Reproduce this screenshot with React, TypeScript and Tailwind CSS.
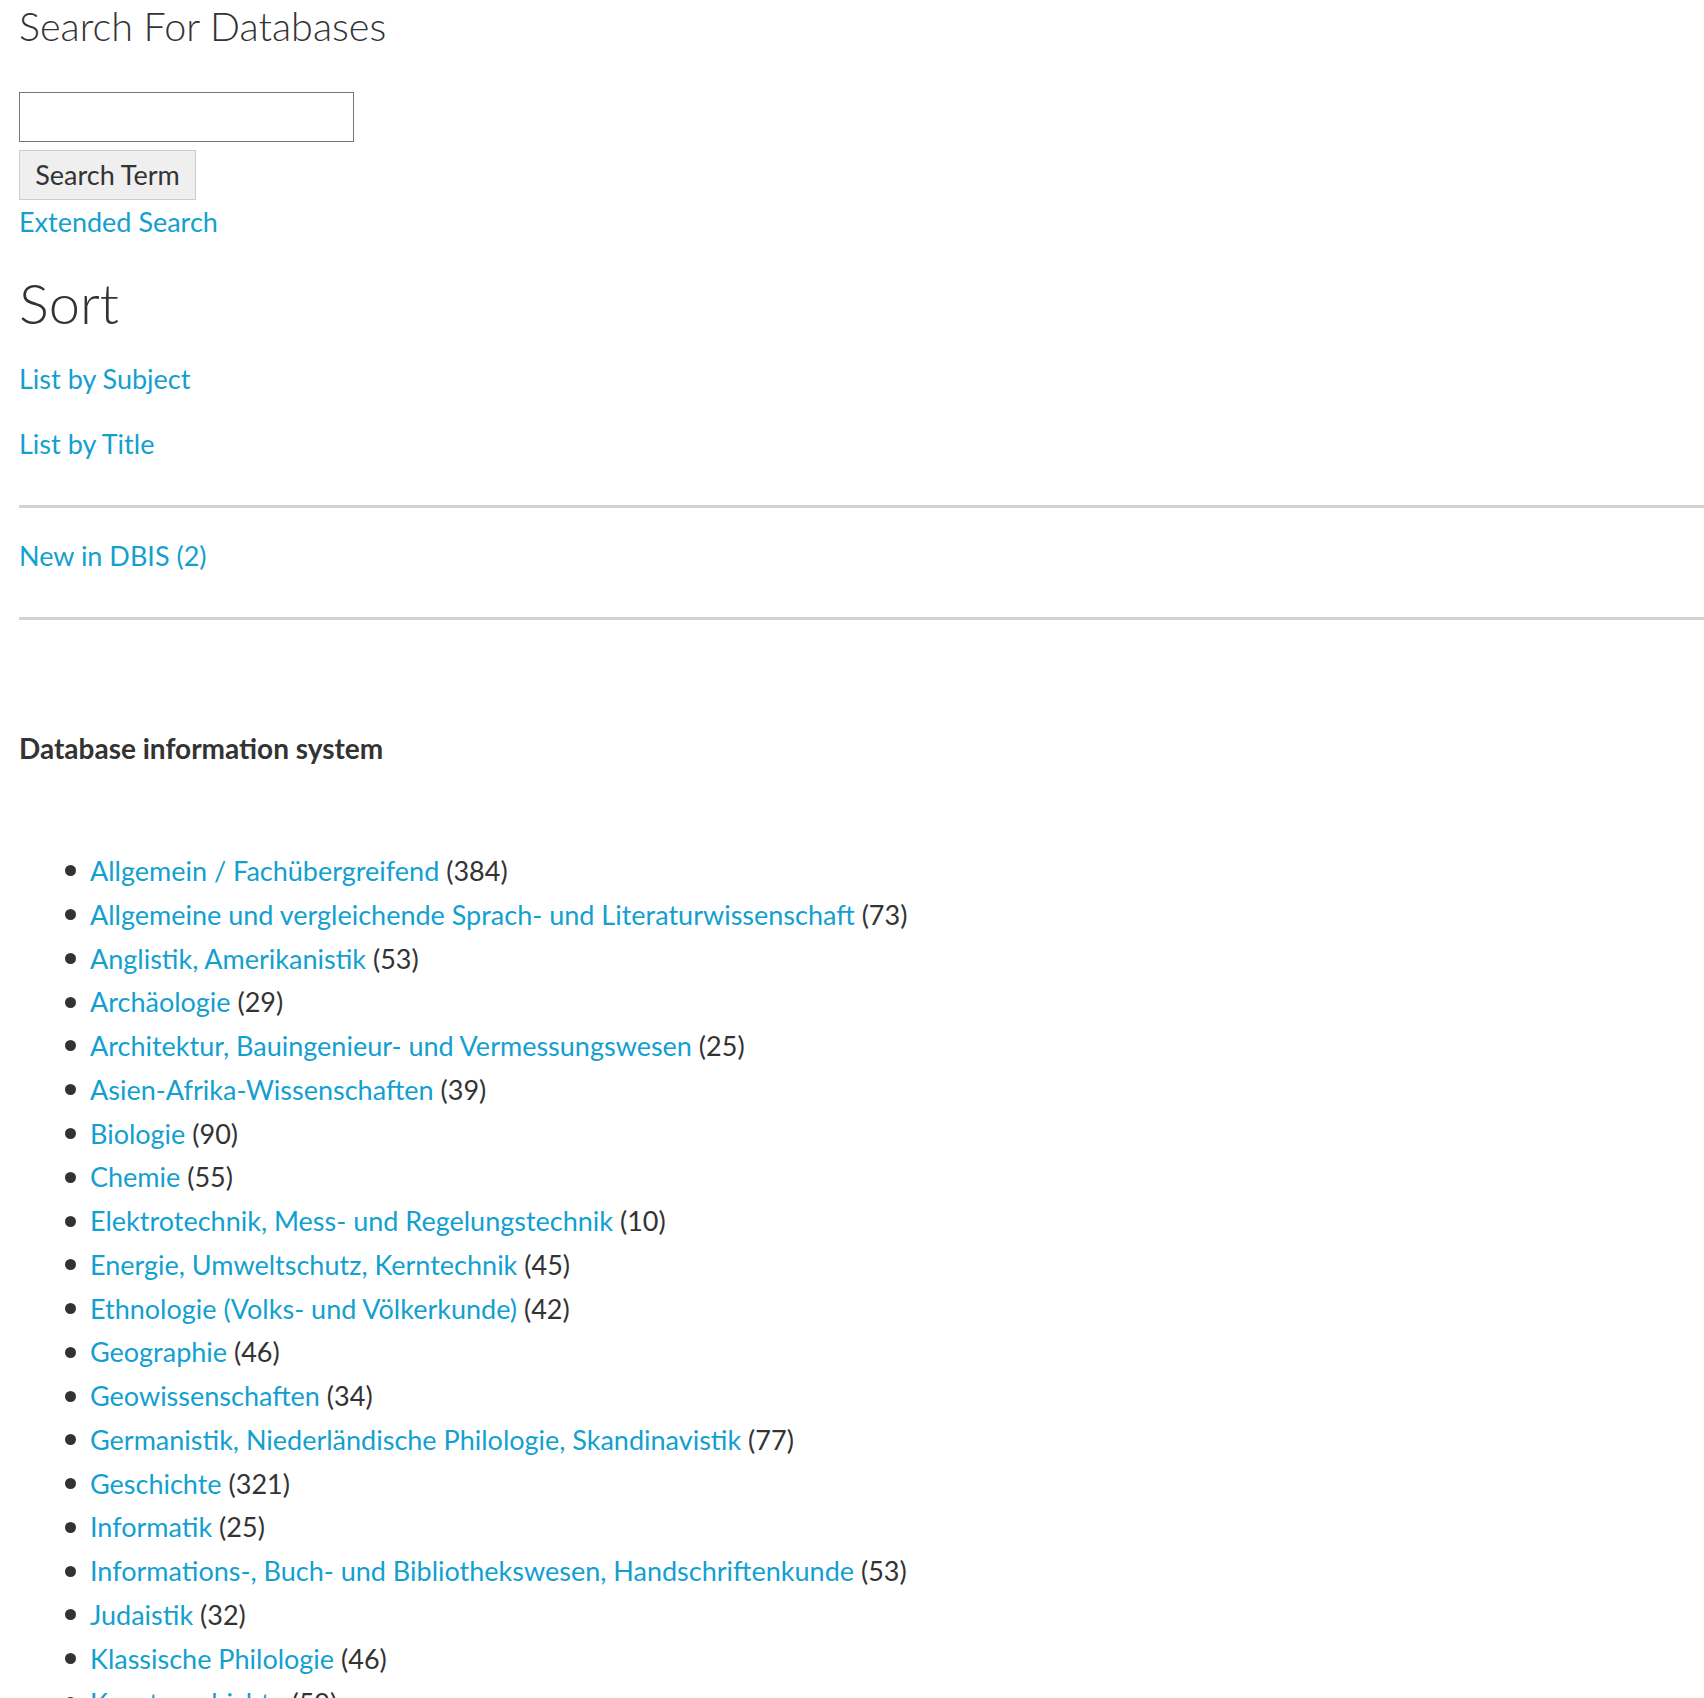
import React from 'react';

const SUBJECTS: { name: string; count: number }[] = [
  { name: 'Allgemein / Fachübergreifend', count: 384 },
  { name: 'Allgemeine und vergleichende Sprach- und Literaturwissenschaft', count: 73 },
  { name: 'Anglistik, Amerikanistik', count: 53 },
  { name: 'Archäologie', count: 29 },
  { name: 'Architektur, Bauingenieur- und Vermessungswesen', count: 25 },
  { name: 'Asien-Afrika-Wissenschaften', count: 39 },
  { name: 'Biologie', count: 90 },
  { name: 'Chemie', count: 55 },
  { name: 'Elektrotechnik, Mess- und Regelungstechnik', count: 10 },
  { name: 'Energie, Umweltschutz, Kerntechnik', count: 45 },
  { name: 'Ethnologie (Volks- und Völkerkunde)', count: 42 },
  { name: 'Geographie', count: 46 },
  { name: 'Geowissenschaften', count: 34 },
  { name: 'Germanistik, Niederländische Philologie, Skandinavistik', count: 77 },
  { name: 'Geschichte', count: 321 },
  { name: 'Informatik', count: 25 },
  { name: 'Informations-, Buch- und Bibliothekswesen, Handschriftenkunde', count: 53 },
  { name: 'Judaistik', count: 32 },
  { name: 'Klassische Philologie', count: 46 },
  { name: 'Kunstgeschichte', count: 59 },
];

const LINK = 'text-[#139fd0] hover:underline';

export default function App() {
  return (
    <div
      className="h-[1698px] overflow-hidden bg-white pl-[19px] text-[27px] leading-[44px] text-[#333]"
      style={{ fontFamily: 'Lato, "Noto Sans", sans-serif' }}
    >
      {/* search */}
      <h1 className="pt-[2px] text-[39.5px] font-light leading-[48px] text-[#333]">Search For Databases</h1>
      <form className="mt-[42px] flex flex-col items-start" onSubmit={(e) => e.preventDefault()}>
        <input
          type="text"
          className="h-[50px] w-[335px] border border-[#777] bg-white px-2 outline-none"
        />
        <button
          type="submit"
          className="mt-[8px] flex h-[50px] w-[177px] items-center justify-center border border-[#ccc] bg-[#efefef] text-[27px] text-[#333]"
        >
          Search Term
        </button>
      </form>
      <a href="#" className={`block ${LINK}`}>Extended Search</a>

      {/* sort */}
      <h2 className="mt-[24px] text-[56px] font-light leading-[70px]">Sort</h2>
      <p className="mt-[19px] mb-[21px]"><a href="#" className={LINK}>List by Subject</a></p>
      <p className="mb-[21px]"><a href="#" className={LINK}>List by Title</a></p>

      <hr className="mt-[39px] border-t-[3px] border-[#d2d2d2]" />
      <p className="mt-[26px]"><a href="#" className={LINK}>New in DBIS (2)</a></p>
      <hr className="mt-[39px] border-t-[3px] border-[#d2d2d2]" />

      <h3 className="mt-[106px] text-[28px] font-bold">Database information system</h3>

      <ul className="mt-[79px] leading-[43.77px]">
        {SUBJECTS.map((s) => (
          <li key={s.name} className="flex items-center pl-[46px]">
            <span className="mr-[14px] h-[11px] w-[11px] shrink-0 rounded-full bg-[#333]" />
            <span>
              <a href="#" className={LINK}>{s.name}</a> ({s.count})
            </span>
          </li>
        ))}
      </ul>
    </div>
  );
}
